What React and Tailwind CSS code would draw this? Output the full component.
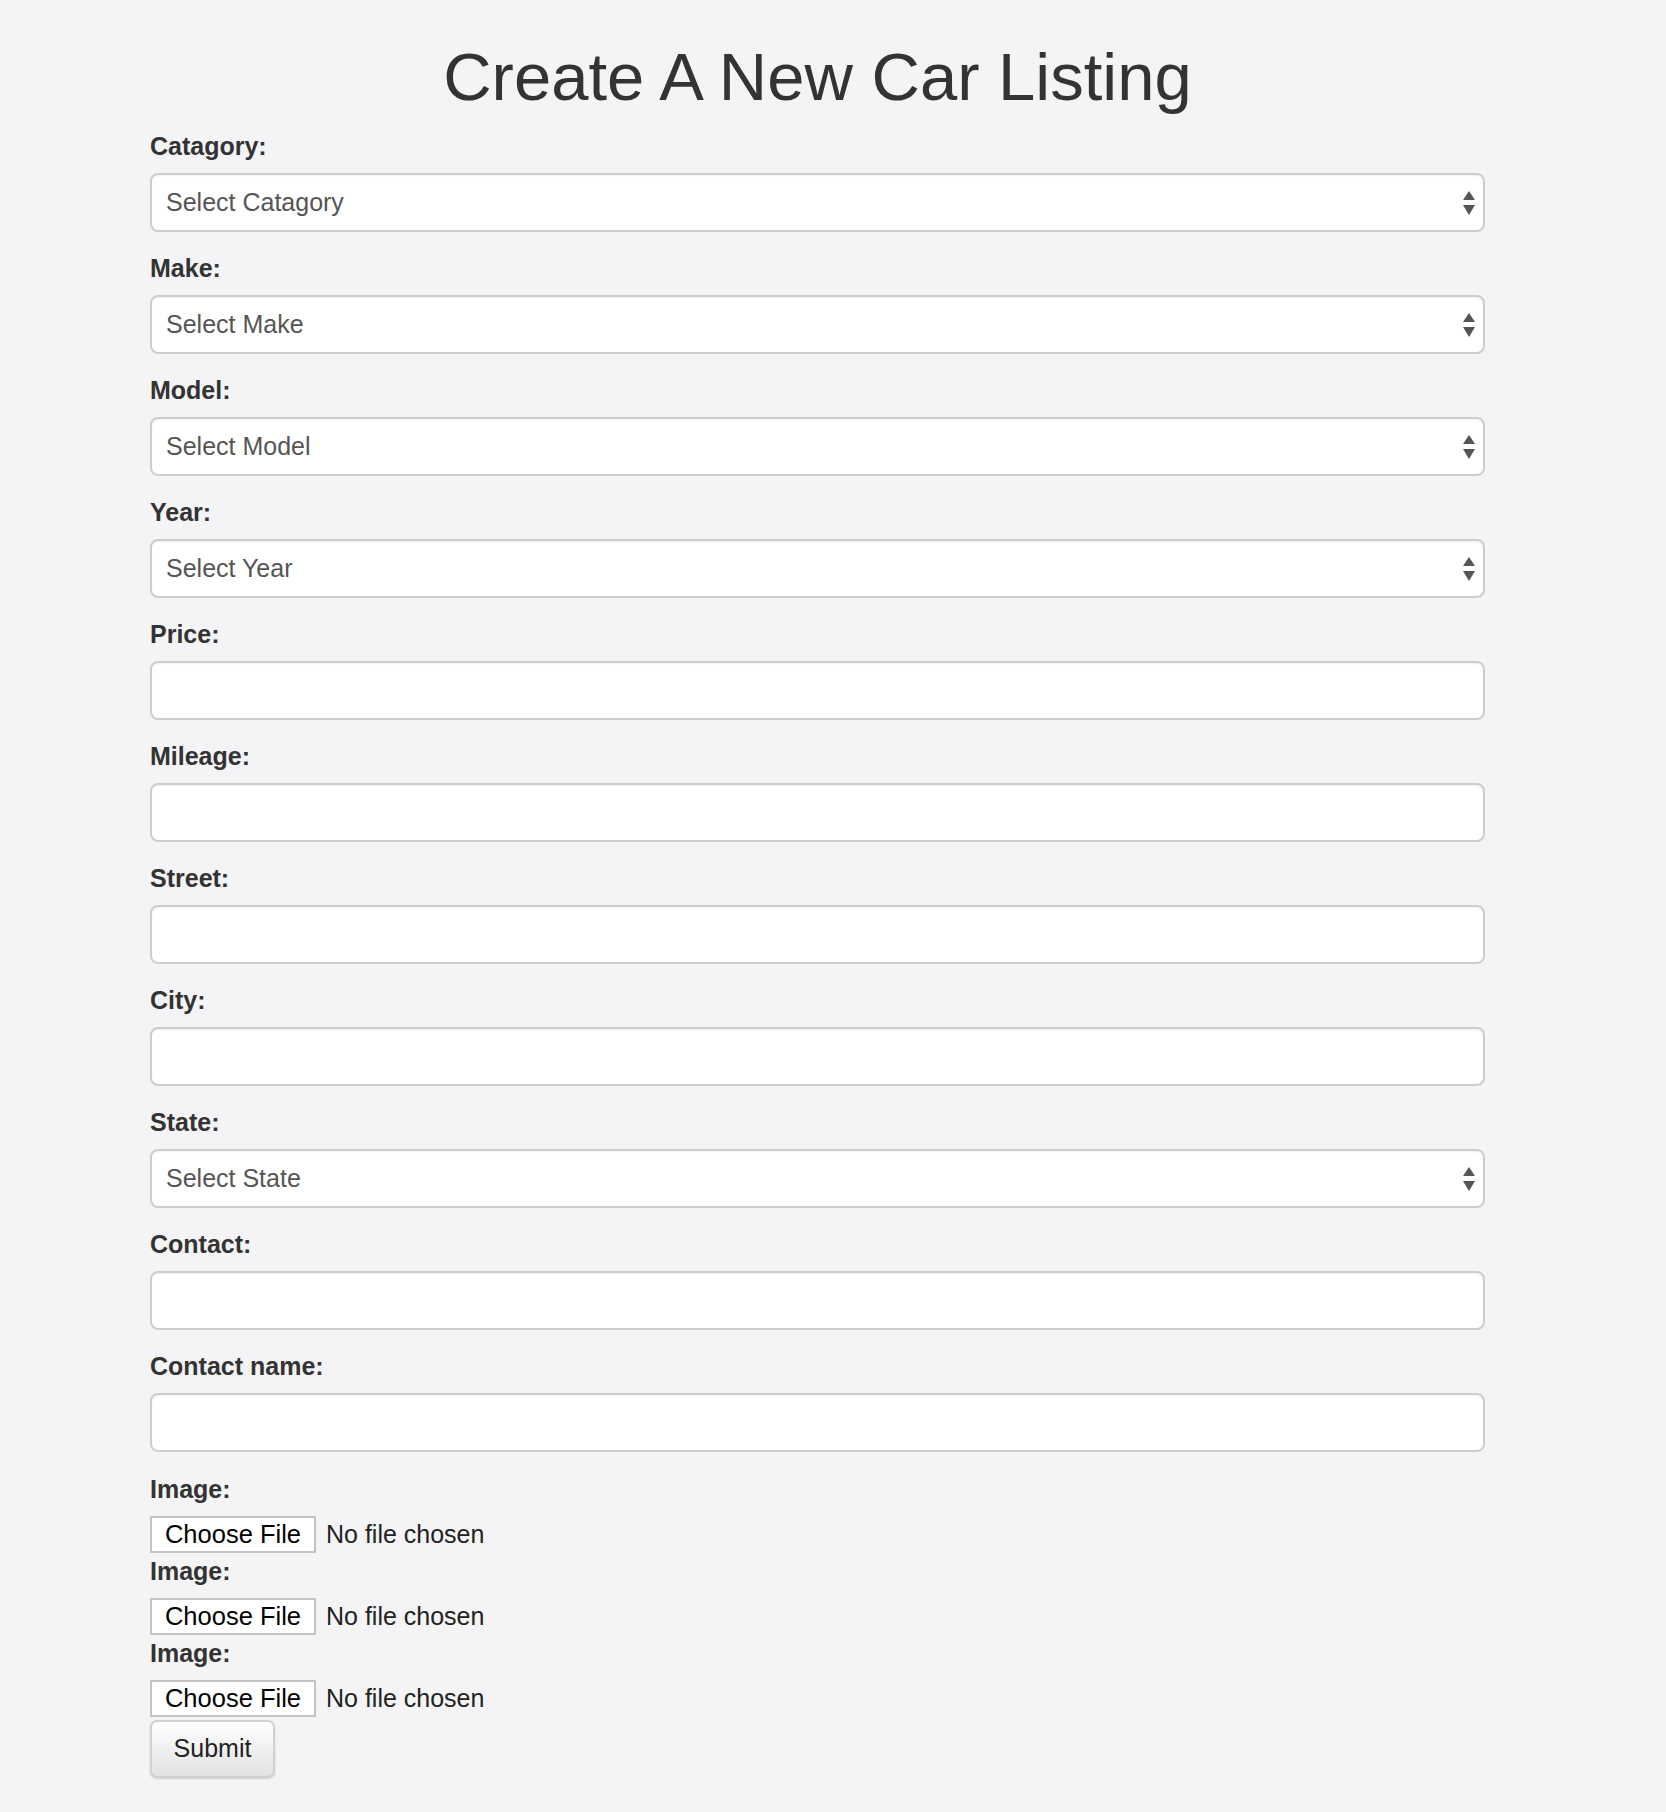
import React from "react";

const fields = [
  { label: "Catagory:", select: "Select Catagory" },
  { label: "Make:", select: "Select Make" },
  { label: "Model:", select: "Select Model" },
  { label: "Year:", select: "Select Year" },
  { label: "Price:" },
  { label: "Mileage:" },
  { label: "Street:" },
  { label: "City:" },
  { label: "State:", select: "Select State" },
  { label: "Contact:" },
  { label: "Contact name:" },
];

function SelectBox({ placeholder }) {
  return (
    <div className="relative">
      <select
        defaultValue=""
        className="block w-full h-[59px] appearance-none rounded-[8px] border-2 border-[#cdcdcd] bg-white px-[14px] text-[25px] text-[#555] shadow-[inset_0_1px_2px_rgba(0,0,0,0.06)] outline-none"
      >
        <option value="">{placeholder}</option>
      </select>
      {/* up/down arrows */}
      <svg
        className="pointer-events-none absolute right-[10px] top-1/2 -translate-y-1/2"
        width="12"
        height="24"
        viewBox="0 0 12 24"
      >
        <polygon points="6,0 12,9 0,9" fill="#555" />
        <polygon points="0,14 12,14 6,24" fill="#555" />
      </svg>
    </div>
  );
}

function TextBox() {
  return (
    <input
      type="text"
      className="block w-full h-[59px] rounded-[8px] border-2 border-[#cdcdcd] bg-white px-[14px] text-[25px] text-[#555] shadow-[inset_0_1px_2px_rgba(0,0,0,0.06)] outline-none"
    />
  );
}

function FileRow() {
  return (
    <div>
      <label className="block text-[25px] leading-[36px] font-bold mb-[9px]">Image:</label>
      <div className="flex items-center h-[37px]">
        <button
          type="button"
          className="h-[37px] w-[166px] border-2 border-[#c4c4c4] bg-white text-[25.5px] leading-none text-black"
        >
          Choose File
        </button>
        <span className="ml-[10px] text-[25px] text-[#222]">No file chosen</span>
      </div>
    </div>
  );
}

export default function App() {
  return (
    <div className="min-h-screen bg-[#f4f4f6] text-[#333] font-['Liberation_Sans',Arial,sans-serif]">
      <div className="ml-[150px] w-[1335px] pt-[40px] pb-[35px]">
        <h1 className="text-center text-[67px] leading-[74px] font-normal">Create A New Car Listing</h1>

        <form className="mt-[15px]" onSubmit={(e) => e.preventDefault()}>
          {fields.map((f) => (
            <div key={f.label} className="mb-[19px]">
              <label className="block text-[25px] leading-[35px] font-bold mb-[9px]">{f.label}</label>
              {f.select ? <SelectBox placeholder={f.select} /> : <TextBox />}
            </div>
          ))}

          <FileRow />
          <FileRow />
          <FileRow />

          <button
            type="submit"
            className="mt-[3px] h-[58px] w-[125px] rounded-[7px] border-2 border-[#d0d0d0] bg-gradient-to-b from-white to-[#e2e2e2] text-[25px] text-[#222] shadow-[0_1px_2px_rgba(0,0,0,0.15)]"
          >
            Submit
          </button>
        </form>
      </div>
    </div>
  );
}
